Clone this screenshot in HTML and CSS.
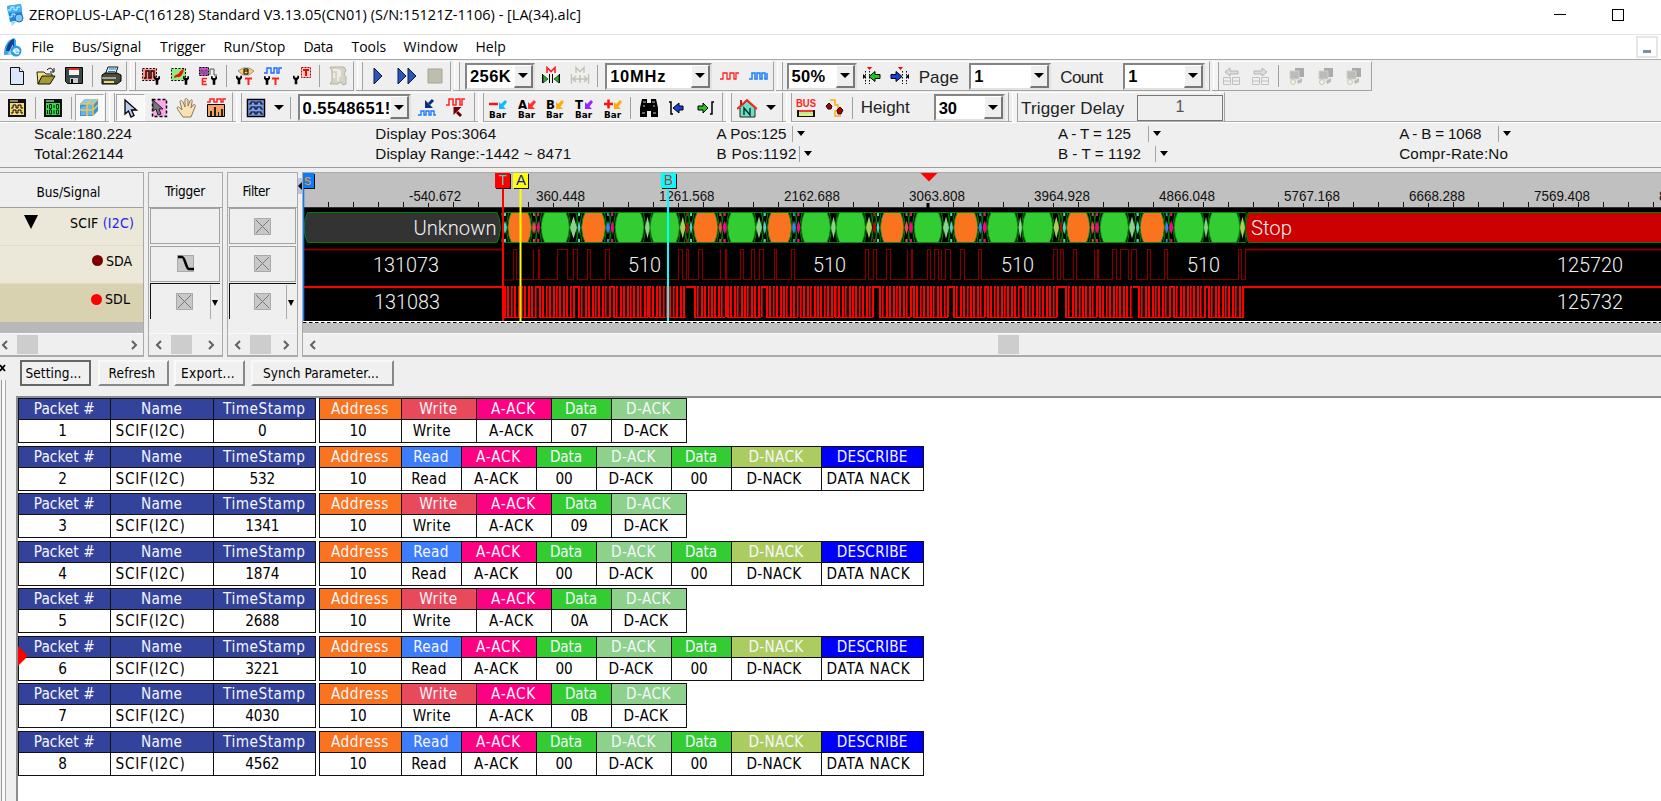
FILE: index.html
```html
<!DOCTYPE html>
<html lang="en">
<head>
<meta charset="utf-8">
<title>ZEROPLUS-LAP-C(16128)</title>
<link rel="stylesheet" href="styles.css">
</head>
<body>
<svg class="defs" width="0" height="0">
  <symbol id="probe" viewBox="0 0 7 10"><path d="M0 0v3l2 2v5h3V5l2-2V0H5v2H2V0z" fill="#000"/></symbol>
  <symbol id="box" viewBox="0 0 17 17"><rect x=".5" y=".5" width="16" height="16" fill="#c8c8c8" stroke="#777" stroke-dasharray="1 1"/><path d="M2 2l13 13M15 2L2 15" stroke="#777"/></symbol>
  <symbol id="cascade" viewBox="0 0 20 20"><path d="M8 2h9v9H8z" fill="#aaa"/><path d="M3 5h9v8H3z" fill="#bbb" stroke="#d2d0c4"/><circle cx="6" cy="16" r="2.5" fill="#eee" stroke="#ccc7b0"/><path d="M10 15l5-3v4l-4 2z" fill="#bbb"/></symbol>
</svg>

<header class="titlebar">
  <svg class="app-icon" width="20" height="22" viewBox="0 0 20 22"><path d="M2 2l14-2 2 15-13 3z" fill="#1d86d8"/><path d="M2 2l14-2 1 8-14 1z" fill="#43b4ef"/><path d="M3 6h3V3h3v3h3V3h3M4 13h3v-3h3v3h2" stroke="#d8f2ff" fill="none"/><circle cx="14" cy="14" r="4" fill="#7cc6f4" stroke="#2369b8"/><path d="M6 18l6-1-5 5z" fill="#9bd9f5"/></svg>
  <span class="title" data-w="552">ZEROPLUS-LAP-C(16128) Standard V3.13.05(CN01) (S/N:15121Z-1106) - [LA(34).alc]</span>
  <span class="win-min"></span><span class="win-max"></span>
</header>

<nav class="menubar">
  <svg class="menu-icon" width="20" height="21" viewBox="0 0 20 21"><path d="M1 18C1 9 4 3 11 1l2 2v14z" fill="#35a9e8"/><path d="M3 14C4 7 7 3 11 2v12z" fill="#123e91"/><path d="M5 17L10 7v10z" fill="#9fe0fa"/><circle cx="13" cy="14" r="5.5" fill="#2e9be0"/><path d="M10 15c1-4 5-4 6-1h-5c1 3 3 3 5 2" stroke="#e3f6ff" stroke-width="1.5" fill="none"/></svg>
  <span class="m m1"><i data-w="22.5">File</i></span><span class="m m2"><i data-w="69.5">Bus/Signal</i></span><span class="m m3"><i data-w="45.5">Trigger</i></span><span class="m m4"><i data-w="62">Run/Stop</i></span><span class="m m5"><i data-w="29.5">Data</i></span><span class="m m6"><i data-w="34.5">Tools</i></span><span class="m m7"><i data-w="54.5">Window</i></span><span class="m"><i data-w="30.5">Help</i></span>
  <span class="mdi"></span>
</nav>

<div class="toolbars">
 <div class="toolrow">
  <div class="band b1 first">
   <span class="btn"><svg width="20" height="20"><path d="M3.500 1.500h9l4 4v13h-13z" fill="#d9e6fb" stroke="#111"/><path d="M12.500 1.500v4h4" fill="#fff" stroke="#111"/></svg></span>
   <span class="btn"><svg width="20" height="20"><path d="M1 6h7l2 2h6v3H6l-4 7z" fill="#f3e083" stroke="#222"/><path d="M2 18l4-8h13l-5 8z" fill="#a69a30" stroke="#111"/><path d="M11 4c3-3 5-2 6 1M18 2v4h-4" fill="none" stroke="#111"/></svg></span>
   <span class="btn"><svg width="20" height="20"><path d="M1.500 1.500h17v16h-15l-2-2z" fill="#3a4a4a" stroke="#000"/><path d="M5 2h10v7H5z" fill="#f4f4f4"/><path d="M5 2h10v2H5z" fill="#e52e20"/><path d="M6 12h8v5H6z" fill="#ccc"/><path d="M7 13h2v4H7z" fill="#000"/></svg></span>
   <span class="sep"></span>
   <span class="btn"><svg width="22" height="20"><path d="M8 1h10l-3 8H5z" fill="#dff3fb" stroke="#111"/><path d="M9 3h7M8 5.500h7" stroke="#27b"/><path d="M2 9l3-2h12l4 2v6l-4 3H2z" fill="#4a4a3d" stroke="#000"/><path d="M2 12h14" stroke="#fff"/><path d="M4 15h10v2H4z" fill="#e7dd63"/></svg></span>
  </div>
  <div class="band b2">
   <span class="btn"><svg width="20" height="20"><path d="M1.500 2.500h14v12h-14z" fill="#f8978e" stroke="#000" stroke-dasharray="2 1.500"/><path d="M3 12h2V5h3v7h2V5h3v7" fill="none" stroke="#300" stroke-width="1.500"/><use href="#probe" x="13" y="10" width="6" height="9"/></svg></span>
   <span class="btn"><svg width="20" height="20"><path d="M1.500 2.500h14v12h-14z" fill="#8dee7c" stroke="#000" stroke-dasharray="2 1.500"/><path d="M4 12c0-4 4-3 5-5s4-4 5-4c-1 5-3 9-7 8z" fill="#f01010"/><use href="#probe" x="13" y="10" width="6" height="9"/></svg></span>
   <span class="btn"><svg width="20" height="20"><path d="M1.500 1.500h9v8h-9z" fill="#e04ae8" stroke="#000" stroke-dasharray="2 1"/><path d="M3 8V4h2v4h2V4h2v5M12 9V3h4v6h3" fill="none" stroke="#555"/><path d="M4.500 12v7M4 12.500h5M4 15.500h4M4 18.500h5" stroke="#f22" stroke-width="1.600"/><use href="#probe" x="13" y="10" width="6" height="9"/></svg></span>
   <span class="sep"></span>
   <span class="btn"><svg width="20" height="20"><path d="M3 5l5-3h6l5 3-5 4H8z" fill="#f5d26a" stroke="#a88"/><path d="M9 3v5h4M9 5h4M9 3h4v5" stroke="#000" fill="none"/><path d="M10 12.500h7M13.500 12v7" stroke="#f22" stroke-width="2"/><use href="#probe" x="1" y="9" width="6" height="10"/></svg></span>
   <span class="btn"><svg width="20" height="20"><path d="M1 7h3V2h4v5h3V2h3v5h2V2h3" stroke="#1c6cff" stroke-width="1.400" fill="none"/><path d="M9 12.500h7M12.500 12v7" stroke="#f22" stroke-width="2"/><use href="#probe" x="1" y="10" width="6" height="9"/></svg></span>
   <span class="btn"><svg width="20" height="20"><path d="M9.500 1.500h9v10h-9z" fill="#ffd0cc" stroke="#a00" stroke-dasharray="2 1"/><path d="M11 4h6M14 4v6" stroke="#f00" stroke-width="2"/><use href="#probe" x="1" y="9" width="6" height="10"/></svg></span>
   <span class="sep"></span>
   <span class="btn"><svg width="20" height="22"><path d="M2 2h14l2 3-2 4 2 3v7l-3 1-2-3-3 2H2l2-3V6z" fill="#d6d4c6" stroke="#b3b1a4"/><path d="M5 5h5v11M12 5v7M6 8v5" stroke="#f6f5ee" fill="none" stroke-width="1.500"/></svg></span>
  </div>
  <div class="band b3">
   <span class="btn"><svg width="20" height="20"><path d="M6 2l8 8-8 8z" fill="#2c56b4" stroke="#0a1a50"/></svg></span>
   <span class="btn"><svg width="22" height="20"><path d="M2 2l8 8-8 8zM12 2l8 8-8 8z" fill="#2c56b4" stroke="#0a1a50"/></svg></span>
   <span class="btn"><svg width="20" height="20"><path d="M3 3h14v14H3z" fill="#bfbdae" stroke="#a5a396"/></svg></span>
  </div>
  <div class="band b4">
   <span class="combo c-mem"><b data-w="41">256K</b><i class="dd"></i></span>
   <span class="btn"><svg width="20" height="20"><path d="M6 7V1.500l4 4 4-4V7" stroke="#f22" stroke-width="1.600" fill="none"/><path d="M1.500 8v9M8.500 8v9M11.500 8v9M18.500 8v9" stroke="#000"/><path d="M2 9l5 4-5 4zM18 9l-5 4 5 4z" fill="#1db51d" stroke="#000" stroke-width=".6"/></svg></span>
   <span class="btn"><svg width="20" height="20"><path d="M6 7V1.500l4 4 4-4V7" stroke="#c9c7b9" stroke-width="1.600" fill="none"/><path d="M1.500 8v10M18.500 8v10M10 9v8M3 13h14M6 10l-3 3 3 3M14 10l3 3-3 3" stroke="#c4c2b5" stroke-width="1.500" fill="none"/></svg></span>
   <span class="sep"></span>
   <span class="combo c-freq"><b data-w="56">10MHz</b><i class="dd"></i></span>
   <span class="btn"><svg width="20" height="20"><path d="M1 13h3V7h4v6h3V7h4v6h2V7h3" stroke="#f22" stroke-width="1.300" fill="none"/></svg></span>
   <span class="btn"><svg width="20" height="20"><path d="M1 13h3V7h3v6h2V7h3v6h2V7h3v6h2V7" stroke="#1c7cff" stroke-width="1.500" fill="none"/></svg></span>
  </div>
  <div class="band b5">
   <span class="combo c-zoom"><b data-w="34">50%</b><i class="dd"></i></span>
   <span class="btn"><svg width="20" height="20"><path d="M5 1h5L7.500 4z" fill="#f00"/><path d="M7.500 5v13M3.500 5v13" stroke="#000" stroke-dasharray="1.500 1.500"/><path d="M1 8v5l3-2.500z" fill="#000"/><path d="M7 10.500l6-5v3h5v4h-5v3z" fill="#22c322" stroke="#000"/></svg></span>
   <span class="btn"><svg width="20" height="20"><path d="M8 1h5l-2.500 3z" fill="#f00"/><path d="M12.500 5v13M16.500 5v13" stroke="#000" stroke-dasharray="1.500 1.500"/><path d="M19 8v5l-3-2.500z" fill="#000"/><path d="M12 10.500l-6-5v3H1v4h5v3z" fill="#1740e0" stroke="#000"/></svg></span>
   <span class="lbl l-page"><i data-w="40">Page</i></span>
   <span class="combo c-page"><b>1</b><i class="dd"></i></span>
   <span class="lbl l-count"><i data-w="42.500">Count</i></span>
   <span class="combo c-count"><b>1</b><i class="dd"></i></span>
  </div>
  <div class="band b6">
   <span class="btn"><svg width="20" height="20"><path d="M3 6l5-4v3h8v3H8v2z" fill="#ddd" stroke="#b5b5b5"/><path d="M1.500 11.500h7v7h-7zM10.500 11.500h7v7h-7zM2 15h6M11 15h6" fill="none" stroke="#c0c0c0"/></svg></span>
   <span class="btn"><svg width="20" height="20"><path d="M16 6l-5-4v3H3v3h8v2z" fill="#ddd" stroke="#b5b5b5"/><path d="M1.500 11.500h7v7h-7zM10.500 11.500h7v7h-7zM2 15h6M11 15h6" fill="none" stroke="#c0c0c0"/></svg></span>
   <span class="sep"></span>
   <span class="btn"><svg width="20" height="20"><use href="#cascade"/></svg></span>
   <span class="btn"><svg width="20" height="20"><use href="#cascade"/></svg></span>
   <span class="btn"><svg width="20" height="20"><use href="#cascade"/></svg></span>
  </div>
 </div>
 <div class="toolrow">
  <div class="band r1 first">
   <span class="btn"><svg width="20" height="20"><path d="M1 1h18v18H1z" fill="#111"/><path d="M3 5h14v12H3z" fill="#f7d978"/><path d="M3 3h8" stroke="#fff"/><path d="M4 10h2V7h3v3h2V7h3v3h2M4 15h2v-3h3v3h2v-3h3v3h2" stroke="#000" fill="none"/></svg></span>
   <span class="sep"></span>
   <span class="btn"><svg width="20" height="20"><path d="M1 1h18v18H1z" fill="#111"/><path d="M3 5h14v12H3z" fill="#3ddb3d"/><path d="M3 3h8" stroke="#fff"/><path d="M4.500 7v3M6.500 6.500h2v4h-2zM11 7v3M13.500 6.500h2v4h-2zM4.500 12v4M6.500 12h2v4h-2zM11 12v4M13.500 12h2v4h-2z" stroke="#022" fill="none"/></svg></span>
   <span class="sep"></span>
   <span class="btn on"><svg width="20" height="20"><path d="M1 6l5-5h13v12l-5 5H1z" fill="#3e92dd"/><path d="M1 6l5-5h13l-4 5z" fill="#8cc8f2"/><path d="M2 9l11-3v11H2z" fill="#67b2ee"/><path d="M1 12h13l5-5M8 6v12M14 6v12M8 6l4-5M1 6h13l5-5" stroke="#e6c94b" stroke-width="1.500" fill="none"/></svg></span>
  </div>
  <div class="band r2">
   <span class="btn on"><svg width="20" height="20"><path d="M5 2v14l3.500-3 2.500 6 3-1.500-2.500-5.500h5z" fill="#b8ccf4" stroke="#000" stroke-width="1.300"/></svg></span>
   <span class="btn"><svg width="20" height="20"><path d="M3.500 1.500h14v17h-14z" fill="#fca6ec" stroke="#000" stroke-width="1.500" stroke-dasharray="3 2"/><path d="M4 2v11l3-2 2 6 3-1-2-5h4z" fill="#777" stroke="#222"/></svg></span>
   <span class="btn"><svg width="22" height="20"><path d="M7 19l-5-7c-2-3 0-4 2-2l2 2-2-8c0-2 2-2 3 0l2 5V2c0-2 2-2 3 0v6l2-5c1-2 3-1 2 1l-1 6 2-3c2-1 3 0 2 2l-4 10z" fill="#fae2b5" stroke="#8b7a60"/></svg></span>
   <span class="btn"><svg width="20" height="20"><path d="M1 4h3V1h4v3h3V1h4v3h2V1h3" stroke="#f22" fill="none" stroke-width="1.500"/><path d="M1.500 6.500h17v12h-17z" fill="#f4a566" stroke="#000"/><path d="M4 18v-5h2v5zM8 18V9h2v9zM12 18v-4h1v4zM15 18v-7h2v7z" fill="#222"/></svg></span>
  </div>
  <div class="band r3">
   <span class="btn"><svg width="20" height="20"><path d="M1.500 1.500h17v17h-17z" fill="#7ba0f4" stroke="#000" stroke-width="1.500"/><path d="M3 6h2V4h4v2h2V4h4v2h2M3 11h2V9h4v2h2V9h4v2h2M3 16h2v-2h4v2h2v-2h4v2h2" stroke="#000" stroke-width="1.100" fill="none"/></svg></span>
   <span class="drop"></span><span class="sep"></span>
   <span class="combo c-val"><b data-w="88">0.5548651!</b><i class="dd"></i></span>
   <span class="btn"><svg width="20" height="20"><path d="M16 2l-4 4" stroke="#0b2f7c" stroke-width="3"/><path d="M8 2v8h8z" fill="#0b2f7c"/><path d="M1 17h3v-4h3v4h2v-4h3v4h2v-4h3v4h2" stroke="#1c7cff" stroke-width="1.400" fill="none"/></svg></span>
   <span class="btn"><svg width="20" height="20"><path d="M1 7h3V1h4v6h3V1h4v6h2V1h3" stroke="#f22" stroke-width="1.500" fill="none"/><path d="M16 18l-4-4" stroke="#600" stroke-width="3"/><path d="M8.500 9h8l-8 8z" fill="#700"/></svg></span>
  </div>
  <div class="band r4" id="bars"></div>
  <div class="band r5">
   <span class="btn"><svg width="20" height="20"><path d="M2 10l8-7 8 7v9H3v-9z" fill="#6fe0c0" stroke="#222"/><path d="M0 11L10 2l10 9" stroke="#f22" stroke-width="2" fill="none"/><path d="M4 2v5" stroke="#a22" stroke-width="2"/><path d="M7 17v-7l6 7v-7" stroke="#033" stroke-width="1.400" fill="none"/></svg></span>
   <span class="drop"></span>
  </div>
  <div class="band r6">
   <span class="btn"><svg width="20" height="20"><text class="bus" x="0" y="9" textLength="20" lengthAdjust="spacingAndGlyphs">BUS</text><path d="M1 12h18v7H1z" fill="#111"/><path d="M3 12h14v2H3z" fill="#f33"/><path d="M3 14h14v2H3z" fill="#9f9"/><path d="M3 16h14v2H3z" fill="#fd8"/></svg></span>
   <span class="btn"><svg width="20" height="20"><path d="M5 2h5v5h3v6h-3v5h6" stroke="#fa1" stroke-width="1.500" fill="none"/><path d="M1 8l3-3 3 3-1 3H3zM12 12l3-3 3 3-2 4h-3z" fill="#a00" stroke="#300"/></svg></span>
   <span class="sep"></span>
   <span class="lbl l-height"><i data-w="49">Height</i></span>
   <span class="combo c-height"><b>30</b><i class="dd"></i></span>
  </div>
  <div class="band r7">
   <span class="lbl l-delay"><i data-w="103.500">Trigger Delay</i></span>
   <span class="delay">1</span>
  </div>
 </div>
</div>

<section class="info">
  <div><p><i data-w="98">Scale:180.224</i></p><p><i data-w="90">Total:262144</i></p></div>
  <div><p><i data-w="121">Display Pos:3064</i></p><p><i data-w="196">Display Range:-1442 ~ 8471</i></p></div>
  <div><p><i data-w="70">A Pos:125</i><s></s></p><p><i data-w="80">B Pos:1192</i><s class="tight"></s></p></div>
  <div><p><i data-w="73">A - T = 125</i><s class="wide"></s></p><p><i data-w="83">B - T = 1192</i><s class="wider"></s></p></div>
  <div><p><i data-w="82">A - B = 1068</i><s class="wide"></s></p><p><i data-w="109">Compr-Rate:No</i></p></div>
</section>

<main class="signals">
  <section class="panel names">
    <h2><i data-w="64">Bus/Signal</i></h2>
    <div class="sig bus-row"><span class="tri"></span><span><i data-w="64">SCIF <em>(I2C)</em></i></span></div>
    <div class="sig"><span class="dot dark"></span><i data-w="26">SDA</i></div>
    <div class="sig sel"><span class="dot"></span><i data-w="25">SDL</i></div>
    <div class="fill"></div>
    <div class="scroll"><svg width="7" height="10"><path d="M6 1L2 5l4 4"/></svg><span class="thumb"></span><svg width="7" height="10"><path d="M1 1l4 4-4 4"/></svg></div>
  </section>
  <section class="panel trig">
    <h2><i data-w="40">Trigger</i></h2>
    <div class="cell"></div>
    <div class="cell"><svg width="17" height="17"><rect x=".5" y=".5" width="16" height="16" fill="#c8c8c8" stroke="#777" stroke-dasharray="1 1"/><path d="M1 2h4c3 0 4 12 7 12h5" stroke="#000" stroke-width="2.500" fill="none"/></svg></div>
    <div class="cell open"><svg width="17" height="17"><use href="#box"/></svg><span class="mini"></span></div>
    <div class="fill"></div>
    <div class="scroll"><svg width="7" height="10"><path d="M6 1L2 5l4 4"/></svg><span class="thumb"></span><svg width="7" height="10"><path d="M1 1l4 4-4 4"/></svg></div>
  </section>
  <section class="panel filt">
    <h2><i data-w="27">Filter</i></h2>
    <div class="cell"><svg width="17" height="17"><use href="#box"/></svg></div>
    <div class="cell"><svg width="17" height="17"><use href="#box"/></svg></div>
    <div class="cell open"><svg width="17" height="17"><use href="#box"/></svg><span class="mini"></span></div>
    <div class="fill"></div>
    <div class="scroll"><svg width="7" height="10"><path d="M6 1L2 5l4 4"/></svg><span class="thumb"></span><svg width="7" height="10"><path d="M1 1l4 4-4 4"/></svg></div>
  </section>
  <span class="knob"></span>
  <section class="panel wave">
    <svg id="wave" width="1358" height="160" viewBox="303 174 1358 160"></svg>
    <div class="scroll"><svg width="7" height="10"><path d="M6 1L2 5l4 4"/></svg><span class="thumb"></span></div>
  </section>
</main>

<section class="packets">
  <aside class="dock"><svg width="6" height="8"><path d="M0 1l5 6M5 1L0 7" stroke="#000" stroke-width="1.800"/></svg><span class="rails"></span></aside>
  <div class="content">
    <div class="buttons"><button class="k1"><i data-w="56">Setting...</i></button><button class="k2"><i data-w="47">Refresh</i></button><button class="k3"><i data-w="54">Export...</i></button><button class="k4"><i data-w="116">Synch Parameter...</i></button></div>
    <div class="list" id="list"></div>
  </div>
</section>
<script src="script.js"></script>
</body>
</html>
```

FILE: styles.css
```css
* { box-sizing: border-box; }
body { margin: 0; width: 1661px; height: 801px; overflow: hidden; background: #efefef; color: #000; font-family: "DejaVu Sans Condensed", "DejaVu Sans", sans-serif; font-stretch: condensed; font-size: 13px; }
i, em { font-style: normal; }
i[data-w], span[data-w], b[data-w] { white-space: nowrap; display: inline-block; }
.defs { position: absolute; }

.titlebar { height: 35px; background: #fff; border-bottom: 1px solid #e3e3e3; display: flex; align-items: center; padding: 0 37px 5px 5px; font-family: "Open Sans", sans-serif; font-stretch: normal; font-size: 14.5px; }
.title { margin-left: 4px; flex: 1; line-height: 20px; }
.win-min { width: 12px; height: 1px; background: #000; margin-right: 46px; }
.win-max { width: 12px; height: 12px; border: 1px solid #000; }

.menubar { height: 25px; background: #fff; border-bottom: 1px solid #aaa; display: flex; align-items: center; padding-left: 3px; font-family: "Open Sans", sans-serif; font-stretch: normal; font-size: 14px; }
.m { line-height: 22px; padding-bottom: 1px; }
.menu-icon { margin-right: 8.5px; }
.m1 { width: 40.5px; } .m2 { width: 88px; } .m3 { width: 63.5px; } .m4 { width: 80px; } .m5 { width: 48px; } .m6 { width: 52px; } .m7 { width: 72px; }
.mdi { margin-left: auto; width: 22px; height: 22px; border: 2px solid #e6e6e6; margin-right: 3px; display: flex; justify-content: center; padding-top: 12px; }
.mdi::after { content: ""; width: 8px; height: 3px; background: #7d8ea0; }

.toolbars { height: 62px; border-bottom: 1px solid #aaa; box-shadow: 0 1px #fff; }
.toolrow { height: 31px; display: flex; align-items: flex-start; gap: 2px; padding-top: 1px; }
.band { height: 30px; display: flex; align-items: center; flex: none; border-right: 1px solid #a2a2a2; border-bottom: 1px solid #a2a2a2; border-top: 1px solid #fff; padding-left: 8px; position: relative; }
.band::before { content: ""; position: absolute; left: 1px; top: 0; bottom: 0; width: 4px; border-left: 1px solid #fff; border-right: 1px solid #a2a2a2; background: #f4f4f4; }
.band.first { padding-left: 3px; }
.band.first::before { display: none; }
.b1 { width: 127px; } .b2 { width: 225px; } .b3 { width: 95px; } .b4 { width: 321px; padding-left: 11px; } .b5 { width: 434px; padding-left: 10.5px; } .b6 { width: 160px; padding-left: 6px; }
.r1 { width: 106px; } .r2 { width: 125px; } .r3 { width: 240px; padding-left: 6.5px; } .r4 { width: 246px; padding-left: 7px; } .r5 { width: 58px; } .r6 { width: 224px; padding-left: 7px; } .r7 { width: 214px; }
.toolrow:nth-child(2) .band { border-bottom: 0; }
.btn { width: 28.6px; height: 27px; flex: none; display: flex; align-items: center; justify-content: center; }
.btn.on { background: #f8f8f8; border: 1px solid #a6a6a6; border-right-color: #fff; border-bottom-color: #fff; }
.sep { width: 7.5px; flex: none; height: 22px; display: flex; justify-content: center; }
.sep::after { content: ""; width: 1px; background: #a0a0a0; }
.combo { flex: none; height: 27px; background: #fff; border: 2px solid #858585; border-right-color: #e2e2e2; border-bottom-color: #e2e2e2; display: flex; justify-content: space-between; align-items: center; padding-left: 3px; font: bold 16.5px "Liberation Sans", sans-serif; overflow: hidden; }
.combo b { flex: none; line-height: 20px; }
.dd { flex: none; width: 19px; height: 23px; background: #efefef; border: 1px solid #fff; border-right: 2px solid #777; border-bottom: 2px solid #777; display: flex; align-items: center; justify-content: center; }
.dd::after, .drop::after { content: ""; border: 5px solid transparent; border-top-color: #000; border-bottom: 0; }
.drop { width: 17px; display: flex; justify-content: center; flex: none; }
.r5 .drop { width: 19px; }
.c-mem { width: 70px; margin: 0 2px 0 1px; } .c-freq { width: 107px; margin: 0 2.500px 0 3.500px; } .c-zoom { width: 70px; margin-right: 1px; }
.c-page { width: 82px; } .c-count { width: 82px; } .c-height { width: 71px; } .c-val { width: 113px; margin: 0 2px 0 3px; }
.c-val b { width: 87px; overflow: hidden; }
.lbl { flex: none; font: 17px "Liberation Sans", sans-serif; color: #222; padding-top: 3px; }
.l-page { width: 54.5px; padding-left: 4px; } .l-count { width: 72px; padding-left: 9px; } .l-height { width: 77px; padding-left: 4px; padding-top: 1px; } .l-delay { width: 118px; padding-left: 2px; }
.delay { width: 86px; height: 26px; border: 1.500px solid #777; font: 16px/22px "Liberation Sans", sans-serif; text-align: center; color: #555; }
.bar-t { font: bold 9px "DejaVu Sans", sans-serif; }
.bus { font: bold 10px "Liberation Sans", sans-serif; fill: #f22; }

.info { height: 46px; border-bottom: 1px solid #9b9b9b; padding: 1.500px 0 0 34px; display: grid; grid-template-columns: repeat(5, 341.3px); font: 15.2px/20px "Liberation Sans", sans-serif; color: #111; }
.info p { margin: 0; height: 20px; display: flex; align-items: center; white-space: nowrap; }
.info s { margin-left: 5px; height: 16px; border-left: 1px solid #a5a5a5; padding: 5px 0 0 4px; }
.info s::after { content: ""; display: block; border: 4.500px solid transparent; border-top: 5px solid #000; border-bottom: 0; }
.info s.tight { margin-left: 2px; } .info s.wide { margin-left: 17px; } .info s.wider { margin-left: 14px; }

.signals { height: 188px; margin-top: 4px; display: flex; align-items: stretch; }
.panel { border: 1px solid #aaa; border-width: 1px 1px 2px 1px; height: 185px; display: flex; flex-direction: column; flex: none; }
.panel h2 { margin: 0; height: 35px; border-bottom: 1px solid #a0a0a0; font-size: 13.5px; font-weight: normal; display: flex; align-items: center; justify-content: center; flex: none; padding-top: 2px; }
.names { width: 144px; border-left: 0; margin-right: 4px; }
.panel.names h2 { padding-right: 6px; padding-top: 4px; }
.trig { width: 75px; margin-right: 4px; } .trig h2 { padding-right: 1px; } .filt { width: 71px; } .filt h2 { padding-right: 13px; }
.sig { height: 38px; background: #ebe8d9; border-bottom: 1px solid #e0dcc8; display: flex; justify-content: flex-end; align-items: center; padding: 0 11px 8px 0; font-size: 14px; gap: 3px; flex: none; }
.sig em { color: #2222f0; }
.bus-row { justify-content: space-between; padding-left: 24px; padding-right: 9px; padding-bottom: 7px; }
.sel { background: #d8d2b0; border: 0; padding-right: 13px; }
.tri { border: 7px solid transparent; border-top: 14px solid #000; border-bottom: 0; margin-top: -3px; }
.dot { width: 11px; height: 11px; border-radius: 50%; background: #f00; } .dot.dark { background: #800000; }
.names .fill { background: #b8b8b8; }
.fill { flex: 1; }
.scroll { height: 22px; flex: none; background: #efefef; border-top: 1px solid #fafafa; display: flex; align-items: center; padding: 0 5px 0 1px; }
.scroll path { fill: none; stroke: #606060; stroke-width: 2; }
.thumb { width: 21px; height: 19px; background: #cdcdcd; margin: 0 auto 0 8.5px; }
.trig .scroll, .filt .scroll { padding: 0 7px 0 6px; }
.cell { height: 36px; border: 1px solid #a2a2a2; margin: 0 2px 1.500px 1px; display: flex; align-items: center; justify-content: center; flex: none; }
.filt .cell { margin-right: 1px; }
.cell.open { border: 0; border-top: 1.500px solid #111; border-left: 1.500px solid #111; padding-left: 25px; justify-content: space-between; }
.filt .cell.open { padding-left: 24px; }
.mini { width: 10px; height: 34px; border-left: 1px solid #aaa; padding: 15px 0 0 1px; }
.mini::after { content: ""; display: block; border: 3.500px solid transparent; border-top: 6px solid #000; border-bottom: 0; width: 0; }
.knob { width: 4px; height: 16px; margin-top: 6px; background: #b8c4e0; display: flex; align-items: center; }
.knob::after { content: ""; border: 4px solid transparent; border-right: 4px solid #000; border-left: 0; }
.wave { width: 1359px; border-right: 0; }
#wave { display: block; flex: none; }
.wave .scroll { padding-left: 6px; } .wave .thumb { margin-left: 682px; }
#wave text { font-family: "Liberation Sans", sans-serif; }
.rul { font-size: 14.5px; fill: #111; }
#wave .big { font-family: Roboto, "Liberation Sans", sans-serif; font-weight: 300; font-stretch: normal; font-size: 20.5px; fill: #f2f2f2; }
.flag { font-size: 14px; }

.packets { display: flex; height: 441px; }
.dock { width: 16px; flex: none; padding-top: 4px; display: flex; flex-direction: column; gap: 8px; }
.rails { width: 5px; margin-left: 1px; flex: 1; border-left: 1px solid #999; border-right: 1.500px solid #aaa; background: #f8f8f8; }
.content { flex: 1; display: flex; flex-direction: column; }
.buttons { display: flex; height: 36px; padding-left: 4px; }
.buttons button { height: 26px; padding: 0; background: #f0f0f0; border: 2px solid #f9f9f9; border-right-color: #888; border-bottom-color: #888; font: inherit; font-size: 13.5px; color: #000; line-height: 18px; }
.k1 { width: 71px; margin-right: 7px; } .buttons .k1 { border-color: #666; padding-right: 4px; } .buttons .k2, .buttons .k3, .buttons .k4 { padding-right: 3px; } .k2 { width: 71px; margin-right: 5px; } .k3 { width: 71px; margin-right: 6px; } .k4 { width: 143px; }
.list { flex: 1; background: #fff; border-top: 2px solid #8d8d8d; border-left: 2px solid #8d8d8d; position: relative; }
.marker { position: absolute; left: 0; top: 248px; border: 10px solid transparent; border-left: 10px solid #f00; border-right: 0; }
.packet { display: flex; height: 45px; margin-bottom: 2.500px; gap: 2.500px; }
.half { display: flex; border: 1px solid #111; border-right: 0; }
.col { border-right: 1px solid #111; height: 43px; text-align: center; font-size: 15.2px; flex: none; }
.head { height: 21px; border-bottom: 1px solid #111; color: #f6f6fc; line-height: 20px; }
.val { line-height: 23px; padding-right: 4px; }
.w-num { width: 91.500px; } .w-name { width: 103px; } .w-time { width: 102.500px; } .w-addr { width: 82px; } .w-Write, .w-ack { width: 75px; } .w-Read, .w-data { width: 60px; } .w-nack { width: 90px; } .w-desc { width: 102.500px; }
.num .head, .name .head, .time .head { background: #33439c; }
.addr .head { background: #fa731f; } .Write .head { background: #e84a5c; } .Read .head { background: #3c7dfc; } .aack .head { background: #ff0082; } .data .head { background: #33cc33; } .dack .head { background: #8dd18d; } .nack .head { background: #adcc60; } .desc .head { background: #0000fa; }
.name .val { text-align: left; padding-left: 5px; }
.desc .val { text-align: left; padding-left: 5px; }
.Write .val { padding-right: 13px; }
.dack .val { padding-right: 5px; }
```

FILE: script.js
```js
const NS = 'http://www.w3.org/2000/svg';
const wave = document.getElementById('wave');
function add(tag, attrs, text) {
  const e = document.createElementNS(NS, tag);
  for (const k in attrs) e.setAttribute(k, attrs[k]);
  if (text) e.textContent = text;
  wave.appendChild(e);
}
function label(cls, x, y, w, text, extra) {
  add('text', Object.assign({ class: cls, x, y, textLength: w, lengthAdjust: 'spacingAndGlyphs' }, extra), text);
}
function rect(x, y, w, h, fill) { add('rect', { x, y, width: w, height: h, fill }); }

/* ruler */
rect(303, 174, 1358, 160, '#c0c0c0');
rect(303, 209, 1358, 114, '#000');
for (let i = 0; i < 55; i++) {
  const major = i % 5 === 0;
  rect(303 + i * 25, major ? 204 : 203, 1, 5, '#111');
}
rect(303, 208, 1358, 1, '#333');
rect(926.5, 204, 3, 5, '#000');
[['-540.672', 409, 52], ['360.448', 536, 49], ['1261.568', 659, 55.5], ['2162.688', 784, 56], ['3063.808', 909, 56], ['3964.928', 1034, 56], ['4866.048', 1159, 56], ['5767.168', 1284, 56], ['6668.288', 1409, 56], ['7569.408', 1534, 56], ['8470.528', 1659, 56]]
  .forEach(([t, x, w]) => label('rul', x, 201.5, w, t));
add('path', { d: 'M920.500 174h17l-8.500 8.500z', fill: '#f00' });

/* decoded bus row */
function hex(a, b, fill, stroke) {
  add('path', { d: `M${a} 228.500L${a + 1.2} 220L${a + 3.5} 213.500H${b - 3.5}L${b - 1.2} 220L${b} 228.500L${b - 1.2} 237L${b - 3.5} 243.500H${a + 3.5}L${a + 1.2} 237Z`, fill, stroke: stroke || 'none' });
}
add('path', { d: 'M503 213.500H1246M503 243.500H1246', stroke: '#008000' });
hex(304, 500.5, '#333', '#008000');
const O = '#fa731f', G = '#33cc33', L = '#8dd18d', Y = '#adcc60', C = '#5cc', B = '#3c7dfc', P = '#ff0082', W = '#e84a5c', R = '#c00';
const cells = [[503, 507, C], [507.7, 531.5, O], [532, 536, W], [536.5, 540, P], [541, 569.5, G], [570, 577, L], [577.5, 580.5, C], [581.5, 605.5, O], [606, 610, B], [610.5, 614, P], [615, 644, G], [645, 650, L], [650, 679.5, G], [680, 685.5, Y], [686, 689, R], [689.5, 692.5, C],
  [693.5, 718, O], [718.5, 722, W], [722.5, 727, P], [727.5, 755.7, G], [756, 762, L], [763, 766.5, C], [767.500, 791.7, O], [792, 796, B], [796.5, 800.5, P], [801, 830.5, G], [831, 836, L], [836, 865.5, G], [866, 872, Y], [872.5, 876, R], [876.5, 879.5, C],
  [880.3, 904, O], [904.5, 908.5, W], [909, 913, P], [914, 942, G], [943, 949, L], [949.5, 953, C], [953.7, 978, O], [978.5, 982, B], [982.5, 987, P], [987.5, 1018, G], [1018.5, 1022, L], [1022.5, 1053, G], [1053.5, 1059, Y], [1059.5, 1062, R], [1062.5, 1066, C],
  [1066.5, 1090, O], [1091, 1094.5, W], [1095, 1099, P], [1100, 1128.5, G], [1129, 1135, L], [1136, 1139.5, C], [1140, 1164.5, O], [1165, 1168.5, B], [1169, 1173.5, P], [1174, 1204, G], [1204, 1208, L], [1208.5, 1240, G], [1240, 1245, Y]];
cells.forEach(([a, b, f]) => {
  if (b - a > 10) { hex(a, b, f, '#0a8a0a'); return; }
  const m = (a + b) / 2;
  add('path', { d: `M${a - 1.5} 214L${a + 1} 228L${a - 1.5} 243M${b + 1.5} 214L${b - 1} 228L${b + 1.5} 243`, stroke: '#008000', fill: 'none' });
  const h = f === L || f === Y ? 11 : 7;
  add('path', { d: `M${m} ${228.5 - h}L${b} 228.500L${m} ${228.5 + h}L${a} 228.500Z`, fill: f });
  if (f !== L && f !== Y) { rect(m - 1, 214, 2, 3, f); rect(m - 1, 240, 2, 3, f); }
});
add('path', { d: 'M1662 213.500H1248.500L1246.500 220L1245.500 228.500L1246.500 237L1248.500 243.500H1662', fill: '#cc0000', stroke: '#008000' });

/* SDA */
const sda = [[513, 516], [533, 533], [538, 539], [557, 567], [573, 577], [587, 590], [605, 609], [678, 682], [686, 688], [698, 702], [720, 720], [725, 726], [740, 743], [751, 754], [759, 763], [774, 776], [791, 794], [865, 868], [873, 876], [886, 890], [907, 907], [911, 912], [927, 930], [934, 938], [941, 941], [945, 950], [960, 964], [978, 981], [1053, 1057], [1060, 1063], [1073, 1076], [1094, 1094], [1097, 1098], [1112, 1116], [1120, 1128], [1131, 1136], [1147, 1150], [1164, 1167], [1238, 1241]];
let d = 'M503.500 250V281';
sda.forEach(([a, b]) => { d += `H${a + .5}V250.500H${b + .5}V280.500`; });
d += 'H1245.500V250';
add('path', { d, stroke: '#800000', fill: 'none', 'stroke-width': 1.2 });
rect(303, 249.5, 200, 2, '#800000'); rect(1245, 249.5, 416, 2, '#800000');

/* SDL: one clock burst per transferred byte */
rect(303, 287, 200, 2, '#f00'); rect(1244, 287, 417, 2, '#f00');
const bytes = [[504, 537], [539, 575], [578, 611], [613, 648], [649, 686], [694, 725], [727, 761], [766, 798], [800, 834], [835, 873], [879, 911], [913, 948], [953, 985], [987, 1020], [1022, 1057], [1065, 1097], [1099, 1133], [1138, 1171], [1173, 1206], [1208, 1244]];
bytes.forEach(([a, b]) => {
  rect(a, 318, b - a, 1, '#f00');
  let n = 0;
  for (let x = a; x < b; x += 3.4, n++) {
    const w = [2, 2, 1, 2, 2, 1, 2][(n + Math.round(a)) % 7];
    rect(Math.round(x), 288, w, 30, '#f00');
    if (w === 1) rect(Math.round(x) + 1, 288, 1, 30, '#a00000');
    rect(Math.round(x), 287, 2, 2, '#f00');
  }
});
for (let i = 1; i < bytes.length; i++) rect(bytes[i - 1][1], 287, bytes[i][0] - bytes[i - 1][1], 2, '#f00');

label('big', 413.5, 235.5, 83, 'Unknown');
label('big', 373, 272.5, 66, '131073'); label('big', 374, 310, 66, '131083');
[628, 813, 1001, 1187].forEach(x => label('big', x, 272.5, 33, '510'));
label('big', 1251, 235.5, 41, 'Stop');
label('big', 1557, 272.5, 66, '125720'); label('big', 1557, 310, 66, '125732');

/* cursors and their flags */
rect(303, 322, 1358, 2, '#fff');
add('path', { d: 'M303 323.500H1661', stroke: '#000', 'stroke-dasharray': '3.500 2.500', 'stroke-width': 1.2 });
rect(303, 174, 1.3, 148, '#0a7cff');
rect(502, 189, 2, 133, '#f00'); rect(519.5, 189, 2, 133, '#ff0'); rect(667, 189, 2, 133, '#0ff');
[[495, 15, '#f00'], [513, 15, '#ff0'], [661, 15, '#0ff'], [303, 11, '#0a7cff']].forEach(([x, w, f]) => { rect(x + 1, 175, w, 15, '#111'); rect(x, 174, w, 15, f); });
label('flag', 499, 186, 8, 'T', { fill: '#40d0d0' }); label('flag', 516, 186, 10, 'A', { fill: '#11c' });
label('flag', 664, 186, 9, 'B', { fill: '#c33' }); label('flag', 304, 186, 7, 's', { fill: '#f90' });

/* bar shortcuts */
const bars = [['-', '#f11', '#1bf'], ['A', '#000', '#f33'], ['B', '#000', '#fa1'], ['T', '#000', '#92f'], ['+', '#f11', '#fa1']];
const glyph = (c, f) => c === '-' ? `<path d="M1 6h9" stroke="${f}" stroke-width="2.500"/>` : c === '+' ? `<path d="M1 6h9M5.500 1.500v9" stroke="${f}" stroke-width="2.500"/>` : `<text x="1" y="11" fill="${f}" font-size="13" font-weight="bold">${c}</text>`;
let html = bars.map(([c, f, a]) => `<span class="btn"><svg width="20" height="20">${glyph(c, f)}<path d="M11 4v7h7l-2.500-2.500L19 4l-2-2-4 4z" fill="${a}"/><text class="bar-t" x="1" y="19.500" textLength="17" lengthAdjust="spacingAndGlyphs">Bar</text></svg></span>`).join('');
html += '<span class="sep"></span>';
html += '<span class="btn"><svg width="20" height="20"><path d="M3 1h5v4h4V1h5l2 9v9h-7v-6H8v6H1v-9z" fill="#000"/><path d="M4 4h3M13 4h3M3 15h3M14 15h3M4 8h2M14 8h2" stroke="#ccc"/></svg></span>';
html += '<span class="btn"><svg width="20" height="20"><path d="M2 4h2v12h2" stroke="#000" stroke-width="1.500" fill="none"/><path d="M6 10l6-5v3h4v4h-4v3z" fill="#1740e0" stroke="#000"/></svg></span>';
html += '<span class="btn"><svg width="20" height="20"><path d="M18 4h-2v12h-2" stroke="#000" stroke-width="1.500" fill="none"/><path d="M12 10L7 5v3H2v4h5v3z" fill="#22c322" stroke="#000"/></svg></span>';
document.getElementById('bars').innerHTML = html;

/* packet list */
const stamps = [0, 532, 1341, 1874, 2688, 3221, 4030, 4562];
const regs = ['07', '', '09', '', '0A', '', '0B', ''];
const col = (cls, w, head, hw, val, vw) => `<div class="col ${cls} w-${w}"><div class="head"><i data-w="${hw}">${head}</i></div><div class="val"><i data-w="${vw}">${val}</i></div></div>`;
document.getElementById('list').innerHTML = stamps.map((t, i) => {
  const ts = String(t);
  let row = '<div class="packet"><div class="half">' + col('num', 'num', 'Packet #', 61, i + 1, 8) + col('name', 'name', 'Name', 41, 'SCIF(I2C)', 70) + col('time', 'time', 'TimeStamp', 82.5, ts, ts.length * 8.5) + '</div><div class="half">' + col('addr', 'addr', 'Address', 58, '10', 17);
  const ack = col('aack', 'ack', 'A-ACK', 45, 'A-ACK', 45), dack = col('dack', 'ack', 'D-ACK', 45, 'D-ACK', 45);
  const data = v => col('data', 'data', 'Data', 32, v, 17);
  row += regs[i] ? col('Write', 'Write', 'Write', 38.5, 'Write', 38.5) + ack + data(regs[i]) + dack
    : col('Read', 'Read', 'Read', 35.5, 'Read', 35.5) + ack + data('00') + dack + data('00') + col('nack', 'nack', 'D-NACK', 55, 'D-NACK', 55) + col('desc', 'desc', 'DESCRIBE', 71, 'DATA NACK', 84);
  return row + '</div></div>';
}).join('') + '<span class="marker"></span>';

/* spread letters so that each label has its fixed width */
document.querySelectorAll('[data-w]').forEach(e => {
  const n = e.textContent.length, w = parseFloat(e.dataset.w);
  const range = document.createRange();
  range.selectNodeContents(e);
  const natural = range.getBoundingClientRect().width;
  e.style.letterSpacing = ((w - natural) / n).toFixed(3) + 'px';
});
```
